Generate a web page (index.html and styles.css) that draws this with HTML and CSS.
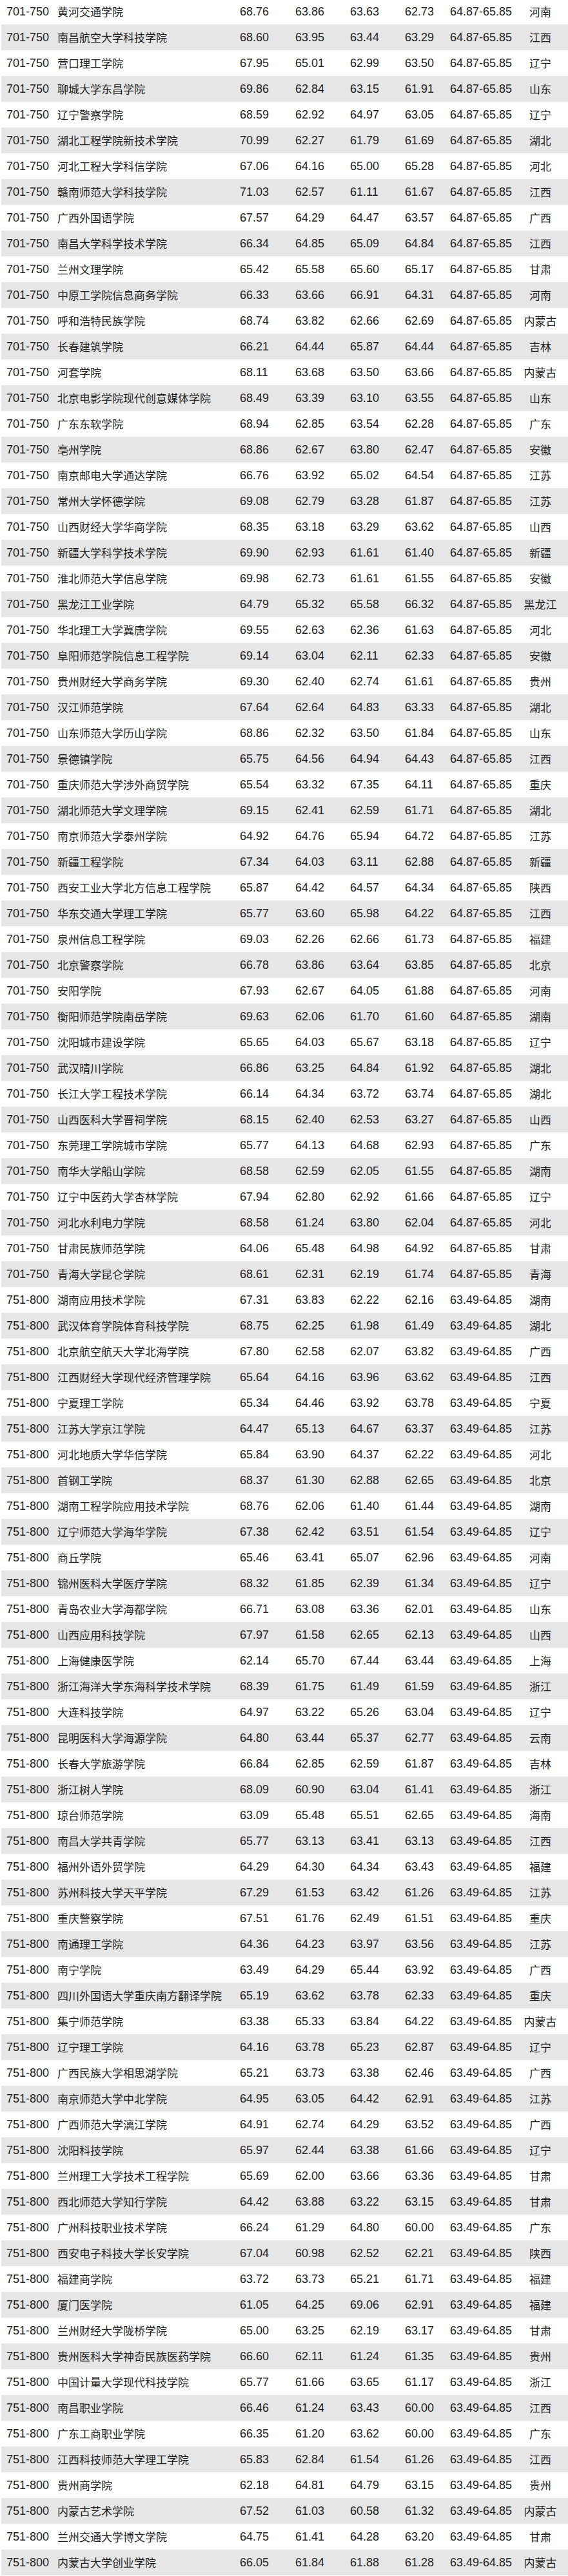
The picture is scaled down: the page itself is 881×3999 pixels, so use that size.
FILE: index.html
```html
<!DOCTYPE html>
<html lang="zh-CN">
<head>
<meta charset="utf-8">
<title>排名表</title>
<link rel="stylesheet" href="styles.css">
</head>
<body>
<table class="rank-table">
<colgroup>
<col class="c-rank"><col class="c-name"><col class="c-s1"><col class="c-s2"><col class="c-s3"><col class="c-s4"><col class="c-range"><col class="c-prov">
</colgroup>
<tbody>
<tr><td class="rk">701-750</td><td class="nm">黄河交通学院</td><td>68.76</td><td>63.86</td><td>63.63</td><td>62.73</td><td>64.87-65.85</td><td class="pv">河南</td></tr>
<tr><td class="rk">701-750</td><td class="nm">南昌航空大学科技学院</td><td>68.60</td><td>63.95</td><td>63.44</td><td>63.29</td><td>64.87-65.85</td><td class="pv">江西</td></tr>
<tr><td class="rk">701-750</td><td class="nm">营口理工学院</td><td>67.95</td><td>65.01</td><td>62.99</td><td>63.50</td><td>64.87-65.85</td><td class="pv">辽宁</td></tr>
<tr><td class="rk">701-750</td><td class="nm">聊城大学东昌学院</td><td>69.86</td><td>62.84</td><td>63.15</td><td>61.91</td><td>64.87-65.85</td><td class="pv">山东</td></tr>
<tr><td class="rk">701-750</td><td class="nm">辽宁警察学院</td><td>68.59</td><td>62.92</td><td>64.97</td><td>63.05</td><td>64.87-65.85</td><td class="pv">辽宁</td></tr>
<tr><td class="rk">701-750</td><td class="nm">湖北工程学院新技术学院</td><td>70.99</td><td>62.27</td><td>61.79</td><td>61.69</td><td>64.87-65.85</td><td class="pv">湖北</td></tr>
<tr><td class="rk">701-750</td><td class="nm">河北工程大学科信学院</td><td>67.06</td><td>64.16</td><td>65.00</td><td>65.28</td><td>64.87-65.85</td><td class="pv">河北</td></tr>
<tr><td class="rk">701-750</td><td class="nm">赣南师范大学科技学院</td><td>71.03</td><td>62.57</td><td>61.11</td><td>61.67</td><td>64.87-65.85</td><td class="pv">江西</td></tr>
<tr><td class="rk">701-750</td><td class="nm">广西外国语学院</td><td>67.57</td><td>64.29</td><td>64.47</td><td>63.57</td><td>64.87-65.85</td><td class="pv">广西</td></tr>
<tr><td class="rk">701-750</td><td class="nm">南昌大学科学技术学院</td><td>66.34</td><td>64.85</td><td>65.09</td><td>64.84</td><td>64.87-65.85</td><td class="pv">江西</td></tr>
<tr><td class="rk">701-750</td><td class="nm">兰州文理学院</td><td>65.42</td><td>65.58</td><td>65.60</td><td>65.17</td><td>64.87-65.85</td><td class="pv">甘肃</td></tr>
<tr><td class="rk">701-750</td><td class="nm">中原工学院信息商务学院</td><td>66.33</td><td>63.66</td><td>66.91</td><td>64.31</td><td>64.87-65.85</td><td class="pv">河南</td></tr>
<tr><td class="rk">701-750</td><td class="nm">呼和浩特民族学院</td><td>68.74</td><td>63.82</td><td>62.66</td><td>62.69</td><td>64.87-65.85</td><td class="pv">内蒙古</td></tr>
<tr><td class="rk">701-750</td><td class="nm">长春建筑学院</td><td>66.21</td><td>64.44</td><td>65.87</td><td>64.44</td><td>64.87-65.85</td><td class="pv">吉林</td></tr>
<tr><td class="rk">701-750</td><td class="nm">河套学院</td><td>68.11</td><td>63.68</td><td>63.50</td><td>63.66</td><td>64.87-65.85</td><td class="pv">内蒙古</td></tr>
<tr><td class="rk">701-750</td><td class="nm">北京电影学院现代创意媒体学院</td><td>68.49</td><td>63.39</td><td>63.10</td><td>63.55</td><td>64.87-65.85</td><td class="pv">山东</td></tr>
<tr><td class="rk">701-750</td><td class="nm">广东东软学院</td><td>68.94</td><td>62.85</td><td>63.54</td><td>62.28</td><td>64.87-65.85</td><td class="pv">广东</td></tr>
<tr><td class="rk">701-750</td><td class="nm">亳州学院</td><td>68.86</td><td>62.67</td><td>63.80</td><td>62.47</td><td>64.87-65.85</td><td class="pv">安徽</td></tr>
<tr><td class="rk">701-750</td><td class="nm">南京邮电大学通达学院</td><td>66.76</td><td>63.92</td><td>65.02</td><td>64.54</td><td>64.87-65.85</td><td class="pv">江苏</td></tr>
<tr><td class="rk">701-750</td><td class="nm">常州大学怀德学院</td><td>69.08</td><td>62.79</td><td>63.28</td><td>61.87</td><td>64.87-65.85</td><td class="pv">江苏</td></tr>
<tr><td class="rk">701-750</td><td class="nm">山西财经大学华商学院</td><td>68.35</td><td>63.18</td><td>63.29</td><td>63.62</td><td>64.87-65.85</td><td class="pv">山西</td></tr>
<tr><td class="rk">701-750</td><td class="nm">新疆大学科学技术学院</td><td>69.90</td><td>62.93</td><td>61.61</td><td>61.40</td><td>64.87-65.85</td><td class="pv">新疆</td></tr>
<tr><td class="rk">701-750</td><td class="nm">淮北师范大学信息学院</td><td>69.98</td><td>62.73</td><td>61.61</td><td>61.55</td><td>64.87-65.85</td><td class="pv">安徽</td></tr>
<tr><td class="rk">701-750</td><td class="nm">黑龙江工业学院</td><td>64.79</td><td>65.32</td><td>65.58</td><td>66.32</td><td>64.87-65.85</td><td class="pv">黑龙江</td></tr>
<tr><td class="rk">701-750</td><td class="nm">华北理工大学冀唐学院</td><td>69.55</td><td>62.63</td><td>62.36</td><td>61.63</td><td>64.87-65.85</td><td class="pv">河北</td></tr>
<tr><td class="rk">701-750</td><td class="nm">阜阳师范学院信息工程学院</td><td>69.14</td><td>63.04</td><td>62.11</td><td>62.33</td><td>64.87-65.85</td><td class="pv">安徽</td></tr>
<tr><td class="rk">701-750</td><td class="nm">贵州财经大学商务学院</td><td>69.30</td><td>62.40</td><td>62.74</td><td>61.61</td><td>64.87-65.85</td><td class="pv">贵州</td></tr>
<tr><td class="rk">701-750</td><td class="nm">汉江师范学院</td><td>67.64</td><td>62.64</td><td>64.83</td><td>63.33</td><td>64.87-65.85</td><td class="pv">湖北</td></tr>
<tr><td class="rk">701-750</td><td class="nm">山东师范大学历山学院</td><td>68.86</td><td>62.32</td><td>63.50</td><td>61.84</td><td>64.87-65.85</td><td class="pv">山东</td></tr>
<tr><td class="rk">701-750</td><td class="nm">景德镇学院</td><td>65.75</td><td>64.56</td><td>64.94</td><td>64.43</td><td>64.87-65.85</td><td class="pv">江西</td></tr>
<tr><td class="rk">701-750</td><td class="nm">重庆师范大学涉外商贸学院</td><td>65.54</td><td>63.32</td><td>67.35</td><td>64.11</td><td>64.87-65.85</td><td class="pv">重庆</td></tr>
<tr><td class="rk">701-750</td><td class="nm">湖北师范大学文理学院</td><td>69.15</td><td>62.41</td><td>62.59</td><td>61.71</td><td>64.87-65.85</td><td class="pv">湖北</td></tr>
<tr><td class="rk">701-750</td><td class="nm">南京师范大学泰州学院</td><td>64.92</td><td>64.76</td><td>65.94</td><td>64.72</td><td>64.87-65.85</td><td class="pv">江苏</td></tr>
<tr><td class="rk">701-750</td><td class="nm">新疆工程学院</td><td>67.34</td><td>64.03</td><td>63.11</td><td>62.88</td><td>64.87-65.85</td><td class="pv">新疆</td></tr>
<tr><td class="rk">701-750</td><td class="nm">西安工业大学北方信息工程学院</td><td>65.87</td><td>64.42</td><td>64.57</td><td>64.34</td><td>64.87-65.85</td><td class="pv">陕西</td></tr>
<tr><td class="rk">701-750</td><td class="nm">华东交通大学理工学院</td><td>65.77</td><td>63.60</td><td>65.98</td><td>64.22</td><td>64.87-65.85</td><td class="pv">江西</td></tr>
<tr><td class="rk">701-750</td><td class="nm">泉州信息工程学院</td><td>69.03</td><td>62.26</td><td>62.66</td><td>61.73</td><td>64.87-65.85</td><td class="pv">福建</td></tr>
<tr><td class="rk">701-750</td><td class="nm">北京警察学院</td><td>66.78</td><td>63.86</td><td>63.64</td><td>63.85</td><td>64.87-65.85</td><td class="pv">北京</td></tr>
<tr><td class="rk">701-750</td><td class="nm">安阳学院</td><td>67.93</td><td>62.67</td><td>64.05</td><td>61.88</td><td>64.87-65.85</td><td class="pv">河南</td></tr>
<tr><td class="rk">701-750</td><td class="nm">衡阳师范学院南岳学院</td><td>69.63</td><td>62.06</td><td>61.70</td><td>61.60</td><td>64.87-65.85</td><td class="pv">湖南</td></tr>
<tr><td class="rk">701-750</td><td class="nm">沈阳城市建设学院</td><td>65.65</td><td>64.03</td><td>65.67</td><td>63.18</td><td>64.87-65.85</td><td class="pv">辽宁</td></tr>
<tr><td class="rk">701-750</td><td class="nm">武汉晴川学院</td><td>66.86</td><td>63.25</td><td>64.84</td><td>61.92</td><td>64.87-65.85</td><td class="pv">湖北</td></tr>
<tr><td class="rk">701-750</td><td class="nm">长江大学工程技术学院</td><td>66.14</td><td>64.34</td><td>63.72</td><td>63.74</td><td>64.87-65.85</td><td class="pv">湖北</td></tr>
<tr><td class="rk">701-750</td><td class="nm">山西医科大学晋祠学院</td><td>68.15</td><td>62.40</td><td>62.53</td><td>63.27</td><td>64.87-65.85</td><td class="pv">山西</td></tr>
<tr><td class="rk">701-750</td><td class="nm">东莞理工学院城市学院</td><td>65.77</td><td>64.13</td><td>64.68</td><td>62.93</td><td>64.87-65.85</td><td class="pv">广东</td></tr>
<tr><td class="rk">701-750</td><td class="nm">南华大学船山学院</td><td>68.58</td><td>62.59</td><td>62.05</td><td>61.55</td><td>64.87-65.85</td><td class="pv">湖南</td></tr>
<tr><td class="rk">701-750</td><td class="nm">辽宁中医药大学杏林学院</td><td>67.94</td><td>62.80</td><td>62.92</td><td>61.66</td><td>64.87-65.85</td><td class="pv">辽宁</td></tr>
<tr><td class="rk">701-750</td><td class="nm">河北水利电力学院</td><td>68.58</td><td>61.24</td><td>63.80</td><td>62.04</td><td>64.87-65.85</td><td class="pv">河北</td></tr>
<tr><td class="rk">701-750</td><td class="nm">甘肃民族师范学院</td><td>64.06</td><td>65.48</td><td>64.98</td><td>64.92</td><td>64.87-65.85</td><td class="pv">甘肃</td></tr>
<tr><td class="rk">701-750</td><td class="nm">青海大学昆仑学院</td><td>68.61</td><td>62.31</td><td>62.19</td><td>61.74</td><td>64.87-65.85</td><td class="pv">青海</td></tr>
<tr><td class="rk">751-800</td><td class="nm">湖南应用技术学院</td><td>67.31</td><td>63.83</td><td>62.22</td><td>62.16</td><td>63.49-64.85</td><td class="pv">湖南</td></tr>
<tr><td class="rk">751-800</td><td class="nm">武汉体育学院体育科技学院</td><td>68.75</td><td>62.25</td><td>61.98</td><td>61.49</td><td>63.49-64.85</td><td class="pv">湖北</td></tr>
<tr><td class="rk">751-800</td><td class="nm">北京航空航天大学北海学院</td><td>67.80</td><td>62.58</td><td>62.07</td><td>63.82</td><td>63.49-64.85</td><td class="pv">广西</td></tr>
<tr><td class="rk">751-800</td><td class="nm">江西财经大学现代经济管理学院</td><td>65.64</td><td>64.16</td><td>63.96</td><td>63.62</td><td>63.49-64.85</td><td class="pv">江西</td></tr>
<tr><td class="rk">751-800</td><td class="nm">宁夏理工学院</td><td>65.34</td><td>64.46</td><td>63.92</td><td>63.78</td><td>63.49-64.85</td><td class="pv">宁夏</td></tr>
<tr><td class="rk">751-800</td><td class="nm">江苏大学京江学院</td><td>64.47</td><td>65.13</td><td>64.67</td><td>63.37</td><td>63.49-64.85</td><td class="pv">江苏</td></tr>
<tr><td class="rk">751-800</td><td class="nm">河北地质大学华信学院</td><td>65.84</td><td>63.90</td><td>64.37</td><td>62.22</td><td>63.49-64.85</td><td class="pv">河北</td></tr>
<tr><td class="rk">751-800</td><td class="nm">首钢工学院</td><td>68.37</td><td>61.30</td><td>62.88</td><td>62.65</td><td>63.49-64.85</td><td class="pv">北京</td></tr>
<tr><td class="rk">751-800</td><td class="nm">湖南工程学院应用技术学院</td><td>68.76</td><td>62.06</td><td>61.40</td><td>61.44</td><td>63.49-64.85</td><td class="pv">湖南</td></tr>
<tr><td class="rk">751-800</td><td class="nm">辽宁师范大学海华学院</td><td>67.38</td><td>62.42</td><td>63.51</td><td>61.54</td><td>63.49-64.85</td><td class="pv">辽宁</td></tr>
<tr><td class="rk">751-800</td><td class="nm">商丘学院</td><td>65.46</td><td>63.41</td><td>65.07</td><td>62.96</td><td>63.49-64.85</td><td class="pv">河南</td></tr>
<tr><td class="rk">751-800</td><td class="nm">锦州医科大学医疗学院</td><td>68.32</td><td>61.85</td><td>62.39</td><td>61.34</td><td>63.49-64.85</td><td class="pv">辽宁</td></tr>
<tr><td class="rk">751-800</td><td class="nm">青岛农业大学海都学院</td><td>66.71</td><td>63.08</td><td>63.36</td><td>62.01</td><td>63.49-64.85</td><td class="pv">山东</td></tr>
<tr><td class="rk">751-800</td><td class="nm">山西应用科技学院</td><td>67.97</td><td>61.58</td><td>62.65</td><td>62.13</td><td>63.49-64.85</td><td class="pv">山西</td></tr>
<tr><td class="rk">751-800</td><td class="nm">上海健康医学院</td><td>62.14</td><td>65.70</td><td>67.44</td><td>63.44</td><td>63.49-64.85</td><td class="pv">上海</td></tr>
<tr><td class="rk">751-800</td><td class="nm">浙江海洋大学东海科学技术学院</td><td>68.39</td><td>61.75</td><td>61.49</td><td>61.59</td><td>63.49-64.85</td><td class="pv">浙江</td></tr>
<tr><td class="rk">751-800</td><td class="nm">大连科技学院</td><td>64.97</td><td>63.22</td><td>65.26</td><td>63.04</td><td>63.49-64.85</td><td class="pv">辽宁</td></tr>
<tr><td class="rk">751-800</td><td class="nm">昆明医科大学海源学院</td><td>64.80</td><td>63.44</td><td>65.37</td><td>62.77</td><td>63.49-64.85</td><td class="pv">云南</td></tr>
<tr><td class="rk">751-800</td><td class="nm">长春大学旅游学院</td><td>66.84</td><td>62.85</td><td>62.59</td><td>61.87</td><td>63.49-64.85</td><td class="pv">吉林</td></tr>
<tr><td class="rk">751-800</td><td class="nm">浙江树人学院</td><td>68.09</td><td>60.90</td><td>63.04</td><td>61.41</td><td>63.49-64.85</td><td class="pv">浙江</td></tr>
<tr><td class="rk">751-800</td><td class="nm">琼台师范学院</td><td>63.09</td><td>65.48</td><td>65.51</td><td>62.65</td><td>63.49-64.85</td><td class="pv">海南</td></tr>
<tr><td class="rk">751-800</td><td class="nm">南昌大学共青学院</td><td>65.77</td><td>63.13</td><td>63.41</td><td>63.13</td><td>63.49-64.85</td><td class="pv">江西</td></tr>
<tr><td class="rk">751-800</td><td class="nm">福州外语外贸学院</td><td>64.29</td><td>64.30</td><td>64.34</td><td>63.43</td><td>63.49-64.85</td><td class="pv">福建</td></tr>
<tr><td class="rk">751-800</td><td class="nm">苏州科技大学天平学院</td><td>67.29</td><td>61.53</td><td>63.42</td><td>61.26</td><td>63.49-64.85</td><td class="pv">江苏</td></tr>
<tr><td class="rk">751-800</td><td class="nm">重庆警察学院</td><td>67.51</td><td>61.76</td><td>62.49</td><td>61.51</td><td>63.49-64.85</td><td class="pv">重庆</td></tr>
<tr><td class="rk">751-800</td><td class="nm">南通理工学院</td><td>64.36</td><td>64.23</td><td>63.97</td><td>63.56</td><td>63.49-64.85</td><td class="pv">江苏</td></tr>
<tr><td class="rk">751-800</td><td class="nm">南宁学院</td><td>63.49</td><td>64.29</td><td>65.44</td><td>63.92</td><td>63.49-64.85</td><td class="pv">广西</td></tr>
<tr><td class="rk">751-800</td><td class="nm">四川外国语大学重庆南方翻译学院</td><td>65.19</td><td>63.62</td><td>63.78</td><td>62.33</td><td>63.49-64.85</td><td class="pv">重庆</td></tr>
<tr><td class="rk">751-800</td><td class="nm">集宁师范学院</td><td>63.38</td><td>65.33</td><td>63.84</td><td>64.22</td><td>63.49-64.85</td><td class="pv">内蒙古</td></tr>
<tr><td class="rk">751-800</td><td class="nm">辽宁理工学院</td><td>64.16</td><td>63.78</td><td>65.23</td><td>62.87</td><td>63.49-64.85</td><td class="pv">辽宁</td></tr>
<tr><td class="rk">751-800</td><td class="nm">广西民族大学相思湖学院</td><td>65.21</td><td>63.73</td><td>63.38</td><td>62.46</td><td>63.49-64.85</td><td class="pv">广西</td></tr>
<tr><td class="rk">751-800</td><td class="nm">南京师范大学中北学院</td><td>64.95</td><td>63.05</td><td>64.42</td><td>62.91</td><td>63.49-64.85</td><td class="pv">江苏</td></tr>
<tr><td class="rk">751-800</td><td class="nm">广西师范大学漓江学院</td><td>64.91</td><td>62.74</td><td>64.29</td><td>63.52</td><td>63.49-64.85</td><td class="pv">广西</td></tr>
<tr><td class="rk">751-800</td><td class="nm">沈阳科技学院</td><td>65.97</td><td>62.44</td><td>63.38</td><td>61.66</td><td>63.49-64.85</td><td class="pv">辽宁</td></tr>
<tr><td class="rk">751-800</td><td class="nm">兰州理工大学技术工程学院</td><td>65.69</td><td>62.00</td><td>63.66</td><td>63.36</td><td>63.49-64.85</td><td class="pv">甘肃</td></tr>
<tr><td class="rk">751-800</td><td class="nm">西北师范大学知行学院</td><td>64.42</td><td>63.88</td><td>63.22</td><td>63.15</td><td>63.49-64.85</td><td class="pv">甘肃</td></tr>
<tr><td class="rk">751-800</td><td class="nm">广州科技职业技术学院</td><td>66.24</td><td>61.29</td><td>64.80</td><td>60.00</td><td>63.49-64.85</td><td class="pv">广东</td></tr>
<tr><td class="rk">751-800</td><td class="nm">西安电子科技大学长安学院</td><td>67.04</td><td>60.98</td><td>62.52</td><td>62.21</td><td>63.49-64.85</td><td class="pv">陕西</td></tr>
<tr><td class="rk">751-800</td><td class="nm">福建商学院</td><td>63.72</td><td>63.73</td><td>65.21</td><td>61.71</td><td>63.49-64.85</td><td class="pv">福建</td></tr>
<tr><td class="rk">751-800</td><td class="nm">厦门医学院</td><td>61.05</td><td>64.25</td><td>69.06</td><td>62.91</td><td>63.49-64.85</td><td class="pv">福建</td></tr>
<tr><td class="rk">751-800</td><td class="nm">兰州财经大学陇桥学院</td><td>65.00</td><td>63.25</td><td>62.19</td><td>63.17</td><td>63.49-64.85</td><td class="pv">甘肃</td></tr>
<tr><td class="rk">751-800</td><td class="nm">贵州医科大学神奇民族医药学院</td><td>66.60</td><td>62.11</td><td>61.24</td><td>61.35</td><td>63.49-64.85</td><td class="pv">贵州</td></tr>
<tr><td class="rk">751-800</td><td class="nm">中国计量大学现代科技学院</td><td>65.77</td><td>61.66</td><td>63.65</td><td>61.17</td><td>63.49-64.85</td><td class="pv">浙江</td></tr>
<tr><td class="rk">751-800</td><td class="nm">南昌职业学院</td><td>66.46</td><td>61.24</td><td>63.43</td><td>60.00</td><td>63.49-64.85</td><td class="pv">江西</td></tr>
<tr><td class="rk">751-800</td><td class="nm">广东工商职业学院</td><td>66.35</td><td>61.20</td><td>63.62</td><td>60.00</td><td>63.49-64.85</td><td class="pv">广东</td></tr>
<tr><td class="rk">751-800</td><td class="nm">江西科技师范大学理工学院</td><td>65.83</td><td>62.84</td><td>61.54</td><td>61.26</td><td>63.49-64.85</td><td class="pv">江西</td></tr>
<tr><td class="rk">751-800</td><td class="nm">贵州商学院</td><td>62.18</td><td>64.81</td><td>64.79</td><td>63.15</td><td>63.49-64.85</td><td class="pv">贵州</td></tr>
<tr><td class="rk">751-800</td><td class="nm">内蒙古艺术学院</td><td>67.52</td><td>61.03</td><td>60.58</td><td>61.32</td><td>63.49-64.85</td><td class="pv">内蒙古</td></tr>
<tr><td class="rk">751-800</td><td class="nm">兰州交通大学博文学院</td><td>64.75</td><td>61.41</td><td>64.28</td><td>63.20</td><td>63.49-64.85</td><td class="pv">甘肃</td></tr>
<tr><td class="rk">751-800</td><td class="nm">内蒙古大学创业学院</td><td>66.05</td><td>61.84</td><td>61.88</td><td>61.28</td><td>63.49-64.85</td><td class="pv">内蒙古</td></tr>
</tbody>
</table>
</body>
</html>
```

FILE: styles.css
```css
html, body {
  margin: 0;
  padding: 0;
  background: #ffffff;
}

.rank-table {
  margin: -2px 0 0 2px;
  width: 879px;
  table-layout: fixed;
  border-collapse: collapse;
  border-spacing: 0;
  color: #222222;
  font-family: "Liberation Sans", "Noto Sans CJK SC", sans-serif;
  font-size: 18px;
}

.c-rank { width: 85px; }
.c-name { width: 283px; }
.c-s1 { width: 86px; }
.c-s2 { width: 85px; }
.c-s3 { width: 85px; }
.c-s4 { width: 70px; }
.c-range { width: 104px; }
.c-prov { width: 81px; }

.rank-table tr {
  height: 40px;
}

.rank-table tr:nth-child(even) {
  background: #e6e6e6;
}

.rank-table td {
  height: 40px;
  padding: 0 0 0 2px;
  line-height: 40px;
  white-space: nowrap;
  overflow: visible;
  text-align: left;
  vertical-align: middle;
}

.rank-table td.rk {
  padding-left: 8px;
}

.rank-table td.nm,
.rank-table td.pv {
  font-family: "Noto Sans CJK SC", sans-serif;
  font-size: 17px;
}

.rank-table td.pv {
  padding: 0 5px 0 0;
  text-align: center;
}
```
